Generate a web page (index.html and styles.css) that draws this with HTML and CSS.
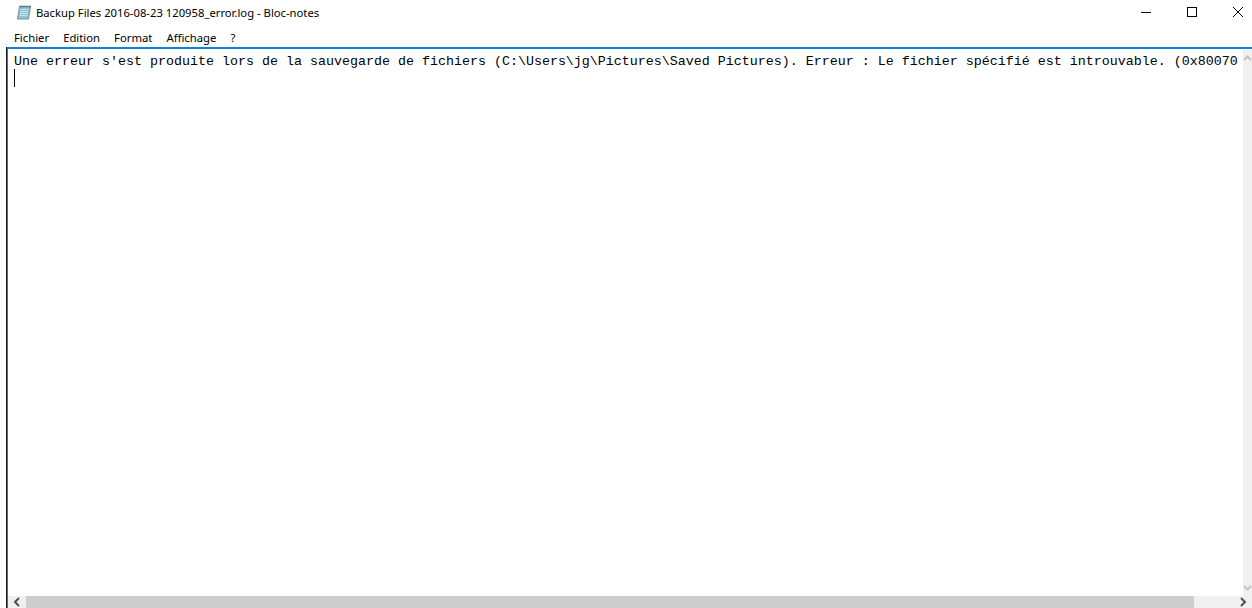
FILE: index.html
```html
<!DOCTYPE html>
<html lang="fr">
<head>
<meta charset="utf-8">
<title>Backup Files 2016-08-23 120958_error.log - Bloc-notes</title>
<link rel="stylesheet" href="styles.css">
</head>
<body>
<div class="window">
  <header class="titlebar">
    <svg class="app-icon" width="16" height="16" viewBox="0 0 16 16">
      <path d="M3.5 2.5h11l-2 12.5h-11z" fill="#8fc4d8" stroke="#7d8c94"/>
      <path d="M4.5 5.5h8M4 7.5h8M3.7 9.5h8M3.4 11.5h8" stroke="#c4e2ec" stroke-width="1"/>
      <path d="M4 1.5v2M6 1.5v2M8 1.5v2M10 1.5v2M12 1.5v2M14 1.5v2" stroke="#5c6a72" stroke-width="1"/>
    </svg>
    <span class="title">Backup Files 2016-08-23 120958_error.log - Bloc-notes</span>
    <div class="controls">
      <button class="control"><svg width="12" height="12" viewBox="0 0 12 12"><path d="M1 6.5h10" stroke="#000"/></svg></button>
      <button class="control"><svg width="12" height="12" viewBox="0 0 12 12"><rect x="1.5" y="1.5" width="9" height="9" fill="none" stroke="#000"/></svg></button>
      <button class="control"><svg width="12" height="12" viewBox="0 0 12 12"><path d="M1 1l10 10M11 1L1 11" stroke="#000"/></svg></button>
    </div>
  </header>
  <nav class="menubar">
    <span class="menu-item">Fichier</span>
    <span class="menu-item">Edition</span>
    <span class="menu-item">Format</span>
    <span class="menu-item">Affichage</span>
    <span class="menu-item">?</span>
  </nav>
  <main class="frame">
    <div class="editor">
      <div class="line">Une erreur s'est produite lors de la sauvegarde de fichiers (C:\Users\jg\Pictures\Saved Pictures). Erreur : Le fichier spécifié est introuvable. (0x80070</div>
      <div class="caret"></div>
    </div>
    <div class="vscroll">
      <svg class="arrow-up" width="9" height="8" viewBox="0 0 9 8"><path d="M1 6l3.5-3.5L8 6" fill="none" stroke="#c4c4c4" stroke-width="2"/></svg>
      <svg class="arrow-down" width="9" height="8" viewBox="0 0 9 8"><path d="M1 2l3.5 3.5L8 2" fill="none" stroke="#c4c4c4" stroke-width="2"/></svg>
    </div>
    <div class="hscroll">
      <div class="hbtn"><svg width="8" height="10" viewBox="0 0 8 10"><path d="M6 1L2 5l4 4" fill="none" stroke="#505050" stroke-width="2"/></svg></div>
      <div class="hthumb"></div>
      <div class="hbtn hbtn-right"><svg width="8" height="10" viewBox="0 0 8 10"><path d="M2 1l4 4-4 4" fill="none" stroke="#505050" stroke-width="2"/></svg></div>
    </div>
  </main>
</div>
</body>
</html>
```
FILE: styles.css
```css
html, body {
  margin: 0;
  height: 100%;
  background: #fff;
  overflow: hidden;
}
.window {
  height: 608px;
  display: flex;
  flex-direction: column;
  font-family: "Noto Sans", "Open Sans", sans-serif;
  font-size: 12px;
  color: #000;
  overflow: hidden;
}
.titlebar {
  height: 24px;
  display: flex;
  align-items: center;
  padding-left: 16px;
}
.app-icon {
  flex: none;
  margin-right: 4px;
}
.title {
  flex: 1;
  font-size: 11.25px;
}
.controls {
  display: flex;
  align-self: flex-start;
  margin-right: -9px;
}
.control {
  width: 46px;
  height: 24px;
  padding: 0;
  border: 0;
  background: none;
  display: flex;
  align-items: center;
  justify-content: center;
}
.menubar {
  box-sizing: border-box;
  height: 23px;
  padding: 3px 0 0 14px;
  display: flex;
  align-items: center;
  gap: 14px;
  font-size: 11.3px;
}
.frame {
  flex: 1;
  min-height: 0;
  margin-left: 6px;
  border-left: 1px solid #1a1a1a;
  display: grid;
  grid-template-columns: 1fr 9px;
  grid-template-rows: 1fr 12px;
  box-shadow: inset 1px 0 0 #0a84e0, inset 0 2px 0 #0a84e0;
}
.editor {
  min-width: 0;
  padding: 5px 0 0 7px;
  overflow: hidden;
  font-family: "Liberation Mono", monospace;
  font-size: 13.33px;
  line-height: 17px;
}
.line {
  white-space: pre;
  padding-top: 1px;
}
.caret {
  width: 1px;
  height: 18px;
  margin-top: -1px;
  background: #000;
}
.vscroll {
  margin-top: 3px;
  background: #f0f0f0;
  display: flex;
  flex-direction: column;
  justify-content: space-between;
  padding: 4px 0;
}
.hscroll {
  grid-column: 1 / -1;
  margin-left: 1px;
  display: flex;
  background: #f0f0f0;
}
.hbtn {
  width: 18px;
  flex: none;
  display: flex;
  align-items: center;
  justify-content: center;
}
.hbtn-right {
  margin-left: auto;
}
.hthumb {
  width: 1168px;
  background: #cdcdcd;
}
```
